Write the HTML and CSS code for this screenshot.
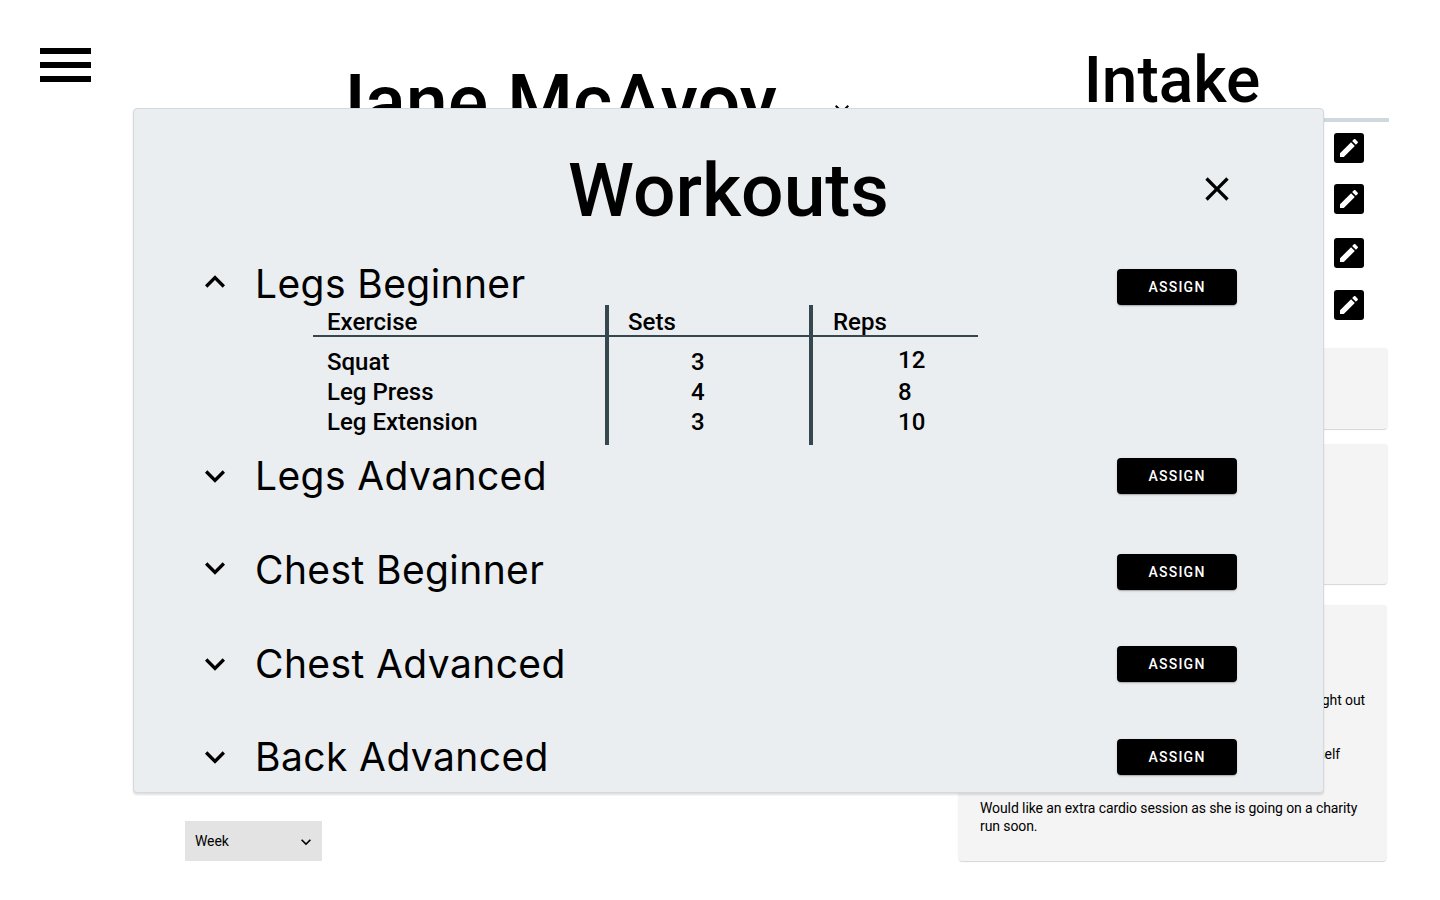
FILE: index.html
```html
<!DOCTYPE html>
<html>
<head>
  <meta charset="UTF-8">
  <title>Jane McAvoy</title>
  <link rel="stylesheet" href="styles.css">
</head>
<body>
  <div class="page">
    <!-- Menu -->
    <div class="rail">
      <div class="hamburger"><span></span><span></span><span></span></div>
    </div>

    <!-- Client -->
    <div class="main">
      <div class="client-head">
        <h1 class="client-name">Jane McAvoy</h1>
        <svg class="client-close" viewBox="0 0 24 24"><path d="M19 6.41L17.59 5 12 10.59 6.41 5 5 6.41 10.59 12 5 17.59 6.41 19 12 13.41 17.59 19 19 17.59 13.41 12z"/></svg>
      </div>
      <div class="week-select">
        <span>Week</span>
        <svg viewBox="0 0 24 24"><path d="M16.59 8.59L12 13.17 7.41 8.59 6 10l6 6 6-6z"/></svg>
      </div>
    </div>

    <!-- Intake -->
    <div class="side">
      <h2 class="side-title">Intake</h2>
      <div class="edit-list">
        <div class="edit-btn"><svg viewBox="0 0 24 24"><path d="M3 17.25V21h3.75L17.81 9.94l-3.75-3.75L3 17.25zM20.71 7.04c.39-.39.39-1.02 0-1.41l-2.34-2.34c-.39-.39-1.02-.39-1.41 0l-1.83 1.83 3.75 3.75 1.83-1.83z"/></svg></div>
        <div class="edit-btn"><svg viewBox="0 0 24 24"><path d="M3 17.25V21h3.75L17.81 9.94l-3.75-3.75L3 17.25zM20.71 7.04c.39-.39.39-1.02 0-1.41l-2.34-2.34c-.39-.39-1.02-.39-1.41 0l-1.83 1.83 3.75 3.75 1.83-1.83z"/></svg></div>
        <div class="edit-btn"><svg viewBox="0 0 24 24"><path d="M3 17.25V21h3.75L17.81 9.94l-3.75-3.75L3 17.25zM20.71 7.04c.39-.39.39-1.02 0-1.41l-2.34-2.34c-.39-.39-1.02-.39-1.41 0l-1.83 1.83 3.75 3.75 1.83-1.83z"/></svg></div>
        <div class="edit-btn"><svg viewBox="0 0 24 24"><path d="M3 17.25V21h3.75L17.81 9.94l-3.75-3.75L3 17.25zM20.71 7.04c.39-.39.39-1.02 0-1.41l-2.34-2.34c-.39-.39-1.02-.39-1.41 0l-1.83 1.83 3.75 3.75 1.83-1.83z"/></svg></div>
      </div>
      <div class="card card-one"></div>
      <div class="card card-two"></div>
      <div class="card card-notes">
        <p class="note-out">night out</p>
        <p class="note-self">herself</p>
        <p>Would like an extra cardio session as she is going on a charity run soon.</p>
      </div>
    </div>
  </div>

  <!-- Workouts dialog -->
  <div class="modal">
    <div class="modal-head">
      <h2 class="modal-title">Workouts</h2>
      <svg class="modal-close" viewBox="0 0 24 24"><path d="M19 6.41L17.59 5 12 10.59 6.41 5 5 6.41 10.59 12 5 17.59 6.41 19 12 13.41 17.59 19 19 17.59 13.41 12z"/></svg>
    </div>

    <div class="workout workout-open">
      <svg class="chevron" viewBox="0 0 24 24"><path d="M12 8l-6 6 1.41 1.41L12 10.83l4.59 4.58L18 14z"/></svg>
      <span class="workout-name">Legs Beginner</span>
      <button class="assign">ASSIGN</button>
    </div>
    <div class="exercises">
      <div class="col col-name">
        <div class="col-head">Exercise</div>
        <div class="cell">Squat</div>
        <div class="cell">Leg Press</div>
        <div class="cell">Leg Extension</div>
      </div>
      <div class="col col-sets">
        <div class="col-head">Sets</div>
        <div class="cell">3</div>
        <div class="cell">4</div>
        <div class="cell">3</div>
      </div>
      <div class="col col-reps">
        <div class="col-head">Reps</div>
        <div class="cell cell-up">12</div>
        <div class="cell">8</div>
        <div class="cell">10</div>
      </div>
    </div>

    <div class="workout workout-legs">
      <svg class="chevron" viewBox="0 0 24 24"><path d="M16.59 8.59L12 13.17 7.41 8.59 6 10l6 6 6-6z"/></svg>
      <span class="workout-name">Legs Advanced</span>
      <button class="assign">ASSIGN</button>
    </div>
    <div class="workout workout-chest">
      <svg class="chevron" viewBox="0 0 24 24"><path d="M16.59 8.59L12 13.17 7.41 8.59 6 10l6 6 6-6z"/></svg>
      <span class="workout-name">Chest Beginner</span>
      <button class="assign">ASSIGN</button>
    </div>
    <div class="workout">
      <svg class="chevron" viewBox="0 0 24 24"><path d="M16.59 8.59L12 13.17 7.41 8.59 6 10l6 6 6-6z"/></svg>
      <span class="workout-name">Chest Advanced</span>
      <button class="assign">ASSIGN</button>
    </div>
    <div class="workout">
      <svg class="chevron" viewBox="0 0 24 24"><path d="M16.59 8.59L12 13.17 7.41 8.59 6 10l6 6 6-6z"/></svg>
      <span class="workout-name">Back Advanced</span>
      <button class="assign">ASSIGN</button>
    </div>
  </div>
</body>
</html>
```

FILE: styles.css
```css
body {
  margin: 0;
  font-family: Roboto, sans-serif;
  color: #000;
  background: #fff;
}

.page {
  display: flex;
  height: 900px;
  overflow: hidden;
}

/* Menu */
.rail {
  width: 133px;
  flex-shrink: 0;
  padding: 48px 0 0 40px;
  box-sizing: border-box;
}

.hamburger {
  display: flex;
  flex-direction: column;
  gap: 8px;
  width: 51px;
}

.hamburger span {
  height: 6px;
  background: #000;
}

/* Client */
.main {
  width: 824px;
  flex-shrink: 0;
}

.client-head {
  display: flex;
  align-items: flex-start;
  padding: 58px 0 0 190px;
  height: 821px;
  box-sizing: border-box;
}

.client-name {
  margin: 0;
  font-size: 75.5px;
  line-height: 88px;
  font-weight: 500;
  white-space: nowrap;
}

.client-close {
  width: 24px;
  height: 24px;
  margin: 42px 0 0 53px;
}

.week-select {
  display: flex;
  align-items: center;
  justify-content: space-between;
  width: 137px;
  height: 40px;
  margin-left: 52px;
  padding: 0 6px 0 10px;
  box-sizing: border-box;
  background: #e3e3e3;
  font-size: 14px;
  letter-spacing: -0.1px;
}

.week-select svg {
  width: 20px;
  height: 20px;
  margin-top: 2px;
}

/* Intake */
.side {
  width: 432px;
  flex-shrink: 0;
}

.side-title {
  margin: 0;
  height: 118px;
  padding: 43px 2px 0 0;
  box-sizing: border-box;
  font-size: 64px;
  line-height: 76px;
  font-weight: 500;
  text-align: center;
}

.edit-list {
  border-top: 4px solid #cfd8dc;
  height: 230px;
  box-sizing: border-box;
  display: flex;
  flex-direction: column;
  align-items: flex-end;
  padding: 11px 25px 0 0;
}

.edit-btn {
  width: 30px;
  height: 30px;
  background: #000;
  border-radius: 3px;
  display: flex;
  align-items: center;
  justify-content: center;
  margin-bottom: 21px;
}

.edit-btn:nth-child(2) {
  margin-bottom: 24px;
}

.edit-btn:nth-child(3) {
  margin-bottom: 22px;
}

.edit-btn svg {
  width: 24px;
  height: 24px;
  fill: #fff;
}

.card {
  background: #f4f4f4;
  border-radius: 4px;
  box-shadow: 0 2px 1px -1px rgba(0, 0, 0, 0.16), 0 0 1px rgba(0, 0, 0, 0.08);
  box-sizing: border-box;
}

.card-one {
  height: 81px;
  margin: 0 1px 15px 0;
}

.card-two {
  height: 140px;
  margin: 0 1px 21px 0;
}

.card-notes {
  height: 256px;
  margin: 0 2px 0 1px;
  padding: 86px 22px 0;
  font-size: 14px;
  line-height: 18px;
  letter-spacing: -0.1px;
}

.card-notes p {
  margin: 0 0 36px;
}

.card-notes .note-out {
  text-align: right;
}

.card-notes .note-self {
  text-align: right;
  padding-right: 25px;
}

/* Workouts dialog */
.modal {
  position: absolute;
  top: 108px;
  left: 133px;
  width: 1191px;
  height: 685px;
  box-sizing: border-box;
  overflow: hidden;
  background: #eaeef1;
  border: 1px solid #d3d9dd;
  border-radius: 4px;
  box-shadow: 0 2px 2px rgba(0, 0, 0, 0.12);
}

.modal-head {
  display: flex;
  align-items: center;
  justify-content: space-between;
  height: 160px;
  padding: 0 86px 0 434px;
}

.modal-title {
  margin: 2px 0 0;
  font-size: 75px;
  font-weight: 500;
  line-height: 158px;
}

.modal-close {
  width: 40px;
  height: 40px;
}

.workout {
  display: flex;
  align-items: center;
  height: 36px;
  padding: 0 86px 0 61px;
  margin-bottom: 56px;
}

.workout-open {
  margin-bottom: 0;
}

.workout-legs {
  margin-bottom: 60px;
}

.workout-chest .chevron {
  margin-bottom: 8px;
}

.workout-open .chevron {
  margin-bottom: 10px;
}

.workout:last-child {
  margin-top: 57px;
}

.chevron {
  width: 40px;
  height: 40px;
  flex-shrink: 0;
}

.workout-name {
  flex: 1;
  margin-left: 20px;
  font-family: Inter, sans-serif;
  font-size: 39px;
  letter-spacing: 0.4px;
  line-height: 36px;
}

.workout-open .workout-name {
  margin-bottom: 6px;
}

.workout-chest .workout-name {
  margin-bottom: 4px;
}

.assign {
  width: 120px;
  height: 36px;
  border: 0;
  border-radius: 4px;
  background: #000;
  color: #fff;
  font-family: Roboto, sans-serif;
  font-size: 14px;
  font-weight: 500;
  letter-spacing: 1.25px;
  box-shadow: 0 2px 1px -1px rgba(0, 0, 0, 0.2), 0 1px 3px rgba(0, 0, 0, 0.12);
}

/* Exercise table */
.exercises {
  display: flex;
  height: 140px;
  margin: 0 0 13px 179px;
  width: 665px;
  font-size: 24px;
  font-weight: 500;
}

.col-name {
  width: 292px;
}

.col-sets {
  width: 204px;
  border-left: 4px solid #37474f;
  box-sizing: border-box;
}

.col-reps {
  width: 169px;
  border-left: 4px solid #37474f;
  box-sizing: border-box;
}

.col-head {
  height: 30px;
  line-height: 34px;
  border-bottom: 2px solid #37474f;
  margin-bottom: 10px;
}

.col-name .col-head,
.col-name .cell {
  padding-left: 14px;
}

.col-sets .col-head {
  padding-left: 19px;
}

.col-reps .col-head {
  padding-left: 20px;
}

.cell {
  height: 30px;
  line-height: 30px;
}

.col-sets .cell {
  padding-left: 82px;
}

.col-reps .cell {
  padding-left: 85px;
}

.cell-up {
  position: relative;
  top: -2px;
}
```
